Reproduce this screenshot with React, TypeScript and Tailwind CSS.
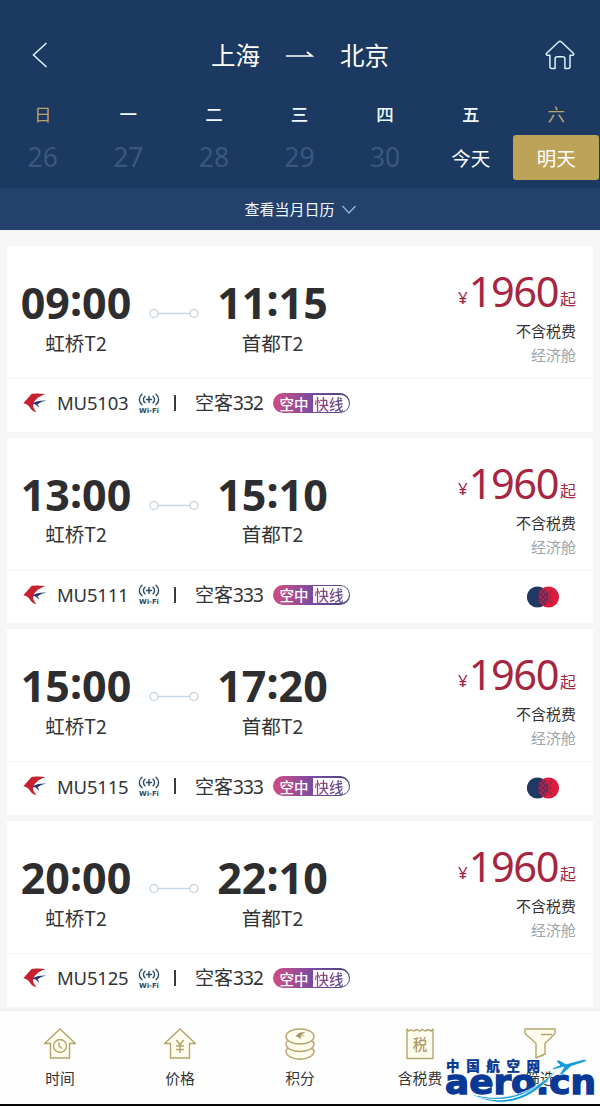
import React from "react";

type Flight = {
  depart: string;
  arrive: string;
  code: string;
  plane: string;
  partner: boolean;
};

const flights: Flight[] = [
  { depart: "09:00", arrive: "11:15", code: "MU5103", plane: "332", partner: false },
  { depart: "13:00", arrive: "15:10", code: "MU5111", plane: "333", partner: true },
  { depart: "15:00", arrive: "17:20", code: "MU5115", plane: "333", partner: true },
  { depart: "20:00", arrive: "22:10", code: "MU5125", plane: "332", partner: false },
];

const days = [
  { week: "日", date: "26" },
  { week: "一", date: "27" },
  { week: "二", date: "28" },
  { week: "三", date: "29" },
  { week: "四", date: "30" },
  { week: "五", date: "今天" },
  { week: "六", date: "明天" },
];

function Header() {
  return (
    <header className="h-[188px] shrink-0 bg-[#1b3961] text-white">
      <div className="flex h-[96px] items-center justify-between pt-[13px] pr-[25px] pl-[32px]">
        <svg width="16" height="26" viewBox="0 0 16 26" fill="none" stroke="#e4f3ff" strokeWidth="1.5">
          <path d="M14.5 1 1.5 13l13 12" />
        </svg>
        <div className="flex items-center pl-[7px] text-[24.5px] leading-[30px]">
          <span>上海</span>
          <svg className="mx-[26px]" width="28" height="8" viewBox="0 0 28 8" fill="none" stroke="#fff" strokeWidth="1.7">
            <path d="M0 5h26L21 1" />
          </svg>
          <span>北京</span>
        </div>
        <svg width="30" height="30" viewBox="0 0 30 30" fill="none" stroke="#d8f3f8" strokeWidth="1.5" strokeLinejoin="round">
          <path d="M15 1.2c-.6 0-1 .3-1.5.8L1.6 13.3c-.7.8-.2 2 .9 2h2.4v11.2c0 1.2.7 2 2 2h3.2V19c0-1.4.7-2.2 2-2.2h5.8c1.3 0 2 .8 2 2.2v9.5H23c1.3 0 2-.8 2-2V15.3h2.5c1.1 0 1.6-1.2.9-2L16.5 2c-.5-.5-.9-.8-1.5-.8Z" />
        </svg>
      </div>
      <div className="grid w-[599px] grid-cols-7 pt-[5px] text-center">
        {days.map((d, i) => (
          <div key={d.week} className="flex flex-col">
            <span className={`h-[26px] text-[17.5px] leading-[25px] ${i === 0 || i === 6 ? "text-[#b9a469]" : "font-medium text-[#f0faff]"}`}>
              {d.week}
            </span>
            <span
              className={
                i === 6
                  ? "mt-[8px] h-[45px] rounded-[3px] bg-[#bda357] text-[19.5px] leading-[45px]"
                  : i === 5
                    ? "mt-[8px] h-[45px] text-[19.5px] leading-[45px]"
                    : "mt-[8px] h-[45px] text-[26.5px] leading-[44px] text-[#3b5780] font-['Noto_Sans',sans-serif]"
              }
            >
              {d.date}
            </span>
          </div>
        ))}
      </div>
    </header>
  );
}

function Time({ value }: { value: string }) {
  const [h, m] = value.split(":");
  return (
    <div className="flex h-[44px] items-center justify-center text-[43px] leading-[44px] font-bold text-[#2e2e30] font-['Noto_Sans',sans-serif]">
      <span>{h}</span>
      <span className="-translate-y-[3px]">:</span>
      <span>{m}</span>
    </div>
  );
}

function AirlineMark() {
  return (
    <svg width="24" height="20" viewBox="0 0 24 20">
      <path d="M22.500 1C17 .2 11 .3 8.500 1 5.500 4.500 2.500 8 .3 10.300c3 .6 5.200 2 6.700 4.500 1.300 2 3.200 3.700 6.500 4.400-2.700-3-3.800-5.500-3.300-7.700C11.200 7.500 15 3.500 22.500 1Z" fill="#c9202f" />
      <path d="M23.500 7.500C17.500 7.200 12.500 8.300 8.500 11c2.500-.2 3.800.3 5 1.200l2.800 2.500c-.4-1.500-.9-2.300-1.800-3.200 2.200-2 5-3.300 9-4Z" fill="#263775" />
    </svg>
  );
}

function Wifi() {
  return (
    <svg width="22" height="21" viewBox="0 0 22 21">
      <g fill="none" stroke="#294b63" strokeWidth="1.4" strokeLinecap="round">
        <path d="M4 1.300C.5 4.200.5 8.800 4 11.700M7 3.300C4.900 5 4.900 8 7 9.700M18 1.300c3.500 2.900 3.500 7.500 0 10.400M15 3.300c2.100 1.700 2.100 4.700 0 6.400M11 3.500v6M8.500 6.500h5" />
      </g>
      <text x="11" y="20" textAnchor="middle" textLength="20" lengthAdjust="spacingAndGlyphs" fontFamily="DejaVu Sans" fontWeight="700" fontSize="7" fill="#294b63">
        Wi-Fi
      </text>
    </svg>
  );
}

function ExpressBadge() {
  return (
    <div className="flex h-[20px] w-[77px] shrink-0 overflow-hidden rounded-full bg-linear-to-r from-[#d04a82] via-[#7d4aa0] via-50% to-[#41437c] p-[1.5px] text-[14.5px] leading-[17px] font-medium">
      <span className="w-[38px] pl-[5px] text-white">空中</span>
      <span className="h-[17px] flex-1 rounded-r-full rounded-tl-[4px] bg-white whitespace-nowrap">
        <span className="bg-linear-to-r from-[#a84679] to-[#514394] bg-clip-text pl-[2px] text-transparent">快线</span>
      </span>
    </div>
  );
}

const checks = [
  [14.5, 6], [14.5, 11], [14.5, 16], [17, 3.5], [17, 8.5], [17, 13.5], [17, 18.5],
  [19.5, 6], [19.5, 11], [19.5, 16],
];
const dots = [
  [22, 8.5], [22, 13.5], [24.5, 6], [24.5, 11], [24.5, 16],
];

function PartnerMark() {
  return (
    <svg className="mt-[4px]" width="34" height="22" viewBox="0 0 34 22">
      <circle cx="22.5" cy="11" r="10.6" fill="#dc1c3c" />
      <circle cx="11.5" cy="11" r="10.6" fill="#203963" />
      <path d="M17 2a10.600 10.600 0 0 1 0 18 10.600 10.600 0 0 1 0-18Z" fill="#6b2a56" />
      {checks.map(([x, y]) => (
        <path key={`${x}-${y}`} transform={`translate(${x} ${y})`} d="M0-1.500 1.500 0 0 1.500-1.500 0Z" fill="#b8264c" />
      ))}
      {dots.map(([x, y]) => (
        <path key={`${x}-${y}`} transform={`translate(${x} ${y})`} d="M0-1.500 1.500 0 0 1.500-1.500 0Z" fill="#94264c" />
      ))}
    </svg>
  );
}

function FlightCard({ flight }: { flight: Flight }) {
  return (
    <article className="h-[185.5px] shrink-0 bg-white text-[#333336]">
      <div className="grid h-[133px] grid-cols-[138px_58.5px_138px_1fr] border-b border-[#f7f7f7]">
        <div className="pt-[35px] text-center">
          <Time value={flight.depart} />
          <p className="mt-[5.5px] text-[19.5px] leading-[24px]">虹桥T2</p>
        </div>
        <svg className="mt-[62px] ml-[4px]" width="50" height="11" viewBox="0 0 50 11" fill="none" stroke="#c9d8e3" strokeWidth="1.5">
          <circle cx="5" cy="5.5" r="4" />
          <circle cx="45" cy="5.5" r="4" />
          <path d="M9 5.5h32" />
        </svg>
        <div className="pt-[35px] text-center">
          <Time value={flight.arrive} />
          <p className="mt-[5.5px] text-[19.5px] leading-[24px]">首都T2</p>
        </div>
        <div className="flex flex-col items-end pt-[23px] pr-[17px]">
          <div className="flex h-[44px] items-center text-[#a62642]">
            <span className="mt-[13px] mr-[1px] text-[17px] leading-[24px] font-['Noto_Sans',sans-serif]">¥</span>
            <span className="text-[41.5px] leading-[44px] tracking-[-1.4px] font-['Noto_Sans',sans-serif]">1960</span>
            <span className="mt-[14px] ml-[2px] text-[16px] leading-[24px]">起</span>
          </div>
          <p className="mt-[6px] text-[15px] leading-[24px]">不含税费</p>
          <p className="text-[15px] leading-[24px] text-[#9aa6ad]">经济舱</p>
        </div>
      </div>
      <div className="flex h-[48px] items-center pr-[33px] pl-[16px]">
        <AirlineMark />
        <span className="ml-[10px] w-[72px] text-[18.5px] tracking-[-0.2px] font-['Noto_Sans',sans-serif] whitespace-nowrap">{flight.code}</span>
        <span className="ml-[9px]">
          <Wifi />
        </span>
        <span className="ml-[14px] h-[16px] w-[2px] bg-[#3c3c40]" />
        <span className="ml-[19px] w-[78px] text-[19px] whitespace-nowrap">
          空客<span className="text-[19px] tracking-[-0.9px] font-['Noto_Sans',sans-serif]">{flight.plane}</span>
        </span>
        <ExpressBadge />
        {flight.partner && (
          <span className="ml-auto">
            <PartnerMark />
          </span>
        )}
      </div>
    </article>
  );
}

const house = "M17 2 1.500 16.500h6V31h19V16.500h6Z";

const tabs = [
  {
    label: "时间",
    icon: (
      <>
        <path d={house} />
        <circle cx="17" cy="19" r="6.5" />
        <path d="M16 15.500v3.500l3 2.500" />
      </>
    ),
  },
  {
    label: "价格",
    icon: (
      <>
        <path d={house} />
        <path d="m13.500 13 3.500 5 3.500-5M17 18v8M13 19h8M13 22.500h8" strokeWidth="1.6" />
      </>
    ),
  },
  {
    label: "积分",
    icon: (
      <>
        <path d="M3 24.500c0 4.200 6.300 7.800 14 7.800s14-3.600 14-7.800c0-4-6.300-5-14-5s-14 1-14 5Z" />
        <path d="M3 17c0 4.200 6.300 7.500 14 7.500S31 21.200 31 17s-6.300-5-14-5-14 .8-14 5Z" />
        <ellipse cx="17" cy="9.500" rx="14" ry="7.500" />
        <path d="M22 5.500c-4-.8-8 1-9 4 2 .2 3.500 1.300 5 3-.5-1.300-1-2.500 0-3.500h3.500c-1.500-.8-3-.5-4 .2 1-1.700 2.500-3 4.500-3.700Z" fill="#a9926b" strokeWidth=".3" />
      </>
    ),
  },
  {
    label: "含税费",
    icon: (
      <>
        <path d="M4 2v29.500h26V2l-1.800 2-3-1.500-3 1.500-2.700-1.500-3 1.500-2.700-1.500-3 1.500L8 2.500 5.800 4Z" />
        <text x="17" y="22.500" textAnchor="middle" fontFamily="Noto Sans CJK SC" fontWeight="500" fontSize="14.5" fill="#ad9860" stroke="none">
          税
        </text>
      </>
    ),
  },
  {
    label: "筛选",
    icon: <path d="M2 2h30v4.500L22 16.500v10.500l-9 4V16.500L2 6.500ZM18 7.500h11M22 21v6l-3 2" />,
  },
];

function TabBar() {
  return (
    <nav className="grid h-[95px] shrink-0 grid-cols-5 border-b-2 border-[#050505] bg-[#fefefe] shadow-[0_-1px_2px_#e8e8e8]">
      {tabs.map((tab) => (
        <div key={tab.label} className="flex flex-col items-center pt-[16px]">
          <svg width="34" height="34" viewBox="0 0 34 34" fill="#fffdee" stroke="#b3a56c" strokeWidth="1.4" strokeLinejoin="round">
            {tab.icon}
          </svg>
          <span className="mt-[5px] text-[14.8px] leading-[24px] text-[#333]">{tab.label}</span>
        </div>
      ))}
    </nav>
  );
}

function Watermark() {
  return (
    <svg className="absolute right-[2px] bottom-[3px] overflow-visible" width="154" height="46" viewBox="0 0 154 46">
      <g fill="#083995" stroke="#083995">
        <text x="2" y="14" textLength="94" fontFamily="Noto Sans CJK SC" fontWeight="900" fontSize="13.5" strokeWidth=".2">
          中国航空网
        </text>
        <text x="1" y="36.5" textLength="151" lengthAdjust="spacingAndGlyphs" fontFamily="DejaVu Sans" fontWeight="700" fontSize="33.5" strokeWidth="1.3">
          aero.cn
        </text>
      </g>
      <g fill="#159dd9" stroke="#fff" strokeWidth=".7">
        <path d="M27 37c33 9 62 0 87-26-19 26-41 36-62 34-9-1-18-4-25-8Z" />
        <path d="M32 39.500c26 6 46 1 63-12-17 15-38 20-63 12Z" fill="#fff" stroke="none" />
        <path d="m112 4 3-1 7 4 15-4c6-1.500 8 0 2 2.500l-12 4-9 8-3 .5 5-8-8 2c-5 1-5-.5-1-2l5-2Z" />
      </g>
    </svg>
  );
}

export default function App() {
  return (
    <div className="relative flex h-[1106px] w-[600px] flex-col overflow-hidden bg-[#f6f6f7] font-['Noto_Sans_CJK_SC',sans-serif]">
      <Header />
      <div className="flex h-[42px] shrink-0 items-center justify-center gap-[7px] bg-[#24416e] text-[15px] leading-[24px] text-[#f0faff]">
        <span>查看当月日历</span>
        <svg width="14" height="9" viewBox="0 0 14 9" fill="none" stroke="#93b5dc" strokeWidth="1.3">
          <path d="m.5 1 6.500 7 6.500-7" />
        </svg>
      </div>
      <main className="flex h-[781px] shrink-0 flex-col gap-[6.2px] px-[7px] pt-[16px]">
        {flights.map((f) => (
          <FlightCard key={f.code} flight={f} />
        ))}
      </main>
      <TabBar />
      <Watermark />
    </div>
  );
}
